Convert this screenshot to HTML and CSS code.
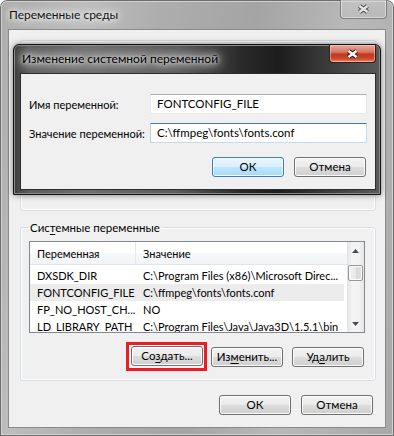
FILE: index.html
```html
<!DOCTYPE html>
<html lang="ru">
<head>
<meta charset="utf-8">
<title>Переменные среды</title>
<link rel="stylesheet" href="styles.css">
</head>
<body>
<div class="win">
  <div class="titlebar">
    <span class="title">Переменные среды</span>
    <div class="close close-inactive">
      <svg width="13" height="10" viewBox="0 0 13 10"><path d="M2.5 2 L10.5 8 M10.5 2 L2.5 8" stroke="#4a4a4a" stroke-width="4.6"/><path d="M2.5 2 L10.5 8 M10.5 2 L2.5 8" stroke="#e6e6e6" stroke-width="2.4"/></svg>
    </div>
  </div>
  <div class="client">
    <div class="group user-group"></div>
    <fieldset class="group sys-group">
      <legend>Сис<u>т</u>емные переменные</legend>
      <div class="listview">
        <div class="lv-main">
          <div class="lv-header">
            <div class="c1">Переменная</div>
            <div class="c2">Значение</div>
          </div>
          <div class="lv-row"><div class="c1">DXSDK_DIR</div><div class="c2">C:\Program Files (x86)\Microsoft Direc...</div></div>
          <div class="lv-row sel"><div class="c1">FONTCONFIG_FILE</div><div class="c2">C:\ffmpeg\fonts\fonts.conf</div></div>
          <div class="lv-row"><div class="c1">FP_NO_HOST_CH...</div><div class="c2">NO</div></div>
          <div class="lv-row"><div class="c1">LD_LIBRARY_PATH</div><div class="c2">C:\Program Files\Java\Java3D\1.5.1\bin</div></div>
        </div>
        <div class="scrollbar">
          <div class="sb-btn"><svg width="7" height="4" viewBox="0 0 7 4"><path d="M0 4 L3.5 0 L7 4 Z" fill="#4d4d4d"/></svg></div>
          <div class="sb-thumb"></div>
          <div class="sb-track"></div>
          <div class="sb-btn"><svg width="7" height="4" viewBox="0 0 7 4"><path d="M0 0 L3.5 4 L7 0 Z" fill="#4d4d4d"/></svg></div>
        </div>
      </div>
      <div class="btn-row group-btns">
        <span class="mark"><button class="btn">Со<u>з</u>дать...</button></span>
        <button class="btn">Из<u>м</u>енить...</button>
        <button class="btn">Уд<u>а</u>лить</button>
      </div>
    </fieldset>
    <div class="btn-row main-btns">
      <button class="btn">ОК</button>
      <button class="btn">Отмена</button>
    </div>
  </div>

  <div class="dialog">
    <div class="dlg-titlebar">
      <span class="dlg-title">Изменение системной переменной</span>
      <div class="close close-active">
        <svg width="13" height="10" viewBox="0 0 13 10"><path d="M2.5 2 L10.5 8 M10.5 2 L2.5 8" stroke="#3a1610" stroke-width="4.6"/><path d="M2.5 2 L10.5 8 M10.5 2 L2.5 8" stroke="#ffffff" stroke-width="2.4"/></svg>
      </div>
    </div>
    <div class="dlg-client">
      <div class="form">
        <label class="lbl">Имя переменной:</label>
        <div class="edit">FONTCONFIG_FILE</div>
        <label class="lbl">Значение переменной:</label>
        <div class="edit focus">C:\ffmpeg\fonts\fonts.conf</div>
      </div>
      <div class="btn-row dlg-btns">
        <button class="btn default">ОК</button>
        <button class="btn">Отмена</button>
      </div>
    </div>
  </div>
</div>
</body>
</html>
```
FILE: styles.css
```css
html, body {
  margin: 0;
  padding: 0;
  background: #ffffff;
}
body {
  font-family: Lato, "Noto Sans", sans-serif;
  font-size: 11px;
  color: #000;
}
u { text-decoration: underline; text-underline-offset: 2px; }

.win {
  position: relative;
  width: 394px;
  height: 436px;
  overflow: hidden;
  border-radius: 7px 7px 0 0;
  background:
    linear-gradient(100deg, rgba(255,255,255,0) 0%, rgba(255,255,255,0.2) 18%, rgba(255,255,255,0) 35%, rgba(0,0,0,0.05) 55%, rgba(255,255,255,0.14) 75%, rgba(0,0,0,0.03) 100%),
    #adadad;
  box-shadow: inset 0 0 0 1px #6e6e6e, inset 0 0 0 2px #cfcfcf;
}

.titlebar {
  height: 29px;
  display: flex;
  align-items: flex-start;
}
.title {
  padding: 7px 0 0 9px;
  line-height: 16px;
  font-size: 12px;
  color: #111;
  text-shadow: 0 0 8px #f4f4f4, 0 0 12px #f4f4f4, 0 0 4px #fff;
}
.close {
  margin-left: auto;
  width: 47px;
  height: 19px;
  box-sizing: border-box;
  display: flex;
  align-items: center;
  justify-content: center;
  border-radius: 0 0 4px 4px;
}
.close-inactive {
  margin-right: 7px;
  border: 1px solid #7d7d7d;
  border-top: none;
  box-shadow: inset 0 0 0 1px rgba(255,255,255,0.45);
  background: linear-gradient(rgba(255,255,255,0.15), rgba(255,255,255,0.05));
}

.client {
  margin: 0 8px;
  height: 399px;
  box-sizing: border-box;
  background: #f0f0f0;
  border: 1px solid #8a8a8a;
  display: flex;
  flex-direction: column;
}

.group {
  border: 1px solid #d5dfe5;
  border-radius: 3px;
  box-shadow: inset 0 0 0 1px #fff;
}
.user-group {
  margin: 10px 9px 0 11px;
  height: 171px;
  box-sizing: border-box;
}
.sys-group {
  margin: 9px 9px 0 11px;
  padding: 0 10px 13px 8px;
  min-width: 0;
}
.sys-group legend {
  margin-left: -1px;
  padding: 0 2px;
  line-height: 15px;
  font-size: 11.5px;
  color: #000;
}

.listview {
  margin-top: 6px;
  width: 336px;
  height: 92px;
  box-sizing: border-box;
  border: 1px solid #828790;
  background: #fff;
  display: flex;
  overflow: hidden;
}
.lv-main {
  flex: 1;
  min-width: 0;
}
.lv-header {
  height: 23px;
  display: flex;
  align-items: center;
  background: linear-gradient(#ffffff 0%, #ffffff 45%, #f6f7f9 55%, #f3f4f6 100%);
  border-bottom: 1px solid #e2e5ea;
  box-sizing: border-box;
}
.lv-header .c1 {
  border-right: 1px solid #e3e8ee;
  height: 23px;
  line-height: 23px;
}
.c1 {
  width: 106px;
  flex: none;
  box-sizing: border-box;
  padding-left: 7px;
  white-space: nowrap;
  overflow: hidden;
}
.c2 {
  padding-left: 7px;
  white-space: nowrap;
}
.lv-row {
  height: 17px;
  line-height: 17px;
  display: flex;
  margin-right: 3px;
}
.lv-header + .lv-row { margin-top: 2px; }
.lv-row.sel { background: #ececec; }

.scrollbar {
  width: 17px;
  flex: none;
  display: flex;
  flex-direction: column;
  background: linear-gradient(to right, #e3e3e3, #f3f3f3 30%, #f3f3f3 70%, #e6e6e6);
}
.sb-btn {
  height: 17px;
  display: flex;
  align-items: center;
  justify-content: center;
  flex: none;
}
.sb-thumb {
  margin: 6px 1px 0 1px;
  height: 14px;
  border: 1px solid #979797;
  border-radius: 2px;
  background: linear-gradient(to right, #f3f3f3, #e8e8e8 50%, #d8d8d8 50%, #e0e0e0);
  box-shadow: inset 0 0 0 1px #fbfbfb;
  flex: none;
}
.sb-track { flex: 1; }

.btn-row {
  display: flex;
  justify-content: flex-end;
  align-items: flex-start;
  gap: 9px;
}
.btn {
  width: 72px;
  height: 20px;
  padding: 0;
  font: inherit;
  font-size: 11.5px;
  color: #000;
  border: 1px solid #707070;
  border-radius: 3px;
  background: linear-gradient(#f2f2f2 0%, #ebebeb 50%, #dddddd 51%, #cfcfcf 100%);
  box-shadow: inset 0 0 0 1px #fcfcfc;
  line-height: 16px;
}
.group-btns {
  margin-top: 14px;
  padding-right: 1px;
}
.mark {
  display: flex;
  margin: -5px;
  padding: 1px 1px 2px 2px;
  border: 3px solid #ee1c24;
  background: #f7f7f7;
}
.main-btns {
  margin-top: 14px;
  padding-right: 12px;
  gap: 10px;
}

/* inner dialog */
.dialog {
  position: absolute;
  left: 13px;
  top: 44px;
  width: 368px;
  height: 151px;
  box-sizing: border-box;
  border: 1px solid #111;
  border-radius: 6px 6px 0 0;
  padding: 0 4px 4px 6px;
  display: flex;
  flex-direction: column;
  background:
    linear-gradient(to right, #3d3d3d 0%, #5c5c5c 4%, #6e6e6e 20%, #5a5a5a 45%, #2a2a2a 62%, #1d1d1d 72%, #404040 88%, #5a5a5a 100%);
  box-shadow: inset 0 0 0 1px #8a8a8a, 0 0 6px rgba(0,0,0,0.5);
}
.dlg-titlebar {
  height: 28px;
  display: flex;
  align-items: flex-start;
  flex: none;
}
.dlg-title {
  padding: 6px 0 0 2px;
  line-height: 16px;
  font-size: 12px;
  color: #000;
  text-shadow: 0 0 8px #e8e8e8, 0 0 12px #e8e8e8, 0 0 4px #fff, 0 0 14px #ddd;
}
.close-active {
  margin-right: 0;
  height: 18px;
  border: 1px solid #3a1a14;
  border-top: none;
  background: linear-gradient(#e9a99a 0%, #d67a63 40%, #c0391f 55%, #c94a2e 80%, #e08a6c 100%);
  box-shadow: inset 0 0 0 1px rgba(255,210,200,0.55);
}

.dlg-client {
  flex: 1;
  box-sizing: border-box;
  background: #f0f0f0;
  border: 1px solid #2c2c2c;
  padding: 20px 9px 0 8px;
  display: flex;
  flex-direction: column;
}
.form {
  display: grid;
  grid-template-columns: 121px 217px;
  grid-auto-rows: 20px;
  row-gap: 9px;
  align-items: center;
}
.lbl {
  white-space: nowrap;
  font-size: 11px;
}
.edit {
  height: 20px;
  box-sizing: border-box;
  background: #fff;
  border: 1px solid #e3e9ef;
  border-top-color: #abadb3;
  padding-left: 6px;
  line-height: 18px;
  font-size: 11.5px;
  white-space: nowrap;
}
.edit.focus {
  border-color: #c5daed;
  border-top-color: #3d7bad;
  border-left-color: #b5cfe7;
}
.dlg-btns {
  margin-top: 14px;
  gap: 10px;
}
.btn.default {
  border-color: #3c7fb1;
  background: linear-gradient(#eaf6fd 0%, #d9f0fc 50%, #bee6fd 51%, #a7d9f5 100%);
  box-shadow: inset 0 0 0 1px #f3fbfe;
}
```
